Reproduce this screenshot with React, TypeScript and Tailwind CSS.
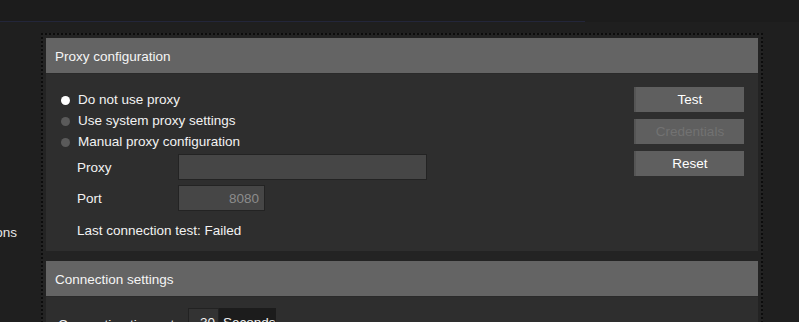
export default function App() {
  const font = { fontFamily: '"Liberation Sans", Arial, sans-serif' };
  return (
    <div className="w-[799px] h-[322px] overflow-hidden bg-[#1f1f1f] text-[#f2f2f2] text-[13.5px]" style={font}>
      {/* top strip */}
      <div className="h-[22px] bg-[#1c1c1c] flex flex-col justify-end">
        <div className="h-px w-[585px] bg-[#23263a]" />
      </div>

      <div className="flex mt-[11px]">
        {/* sidebar, cut off */}
        <div className="w-[41px] shrink-0">
          <div className="w-[17px] overflow-hidden flex justify-end mt-[190px] leading-[20px] text-[#e6e6e6]">
            <span className="shrink-0 whitespace-nowrap">Connections</span>
          </div>
        </div>

        {/* panel */}
        <div className="w-[722px] shrink-0 border-2 border-dotted border-[#0c0c0c] bg-[#232323] pt-[3px] px-[3px]">
          {/* Proxy configuration */}
          <div className="h-[36px] bg-[#646464] border-b border-[#2a2a2a] flex items-center pl-[9px] pt-[3px] text-[#f5f5f5]">
            Proxy configuration
          </div>
          <div className="h-[177px] bg-[#2e2e2e] flex justify-between">
            <div className="pt-[16px] pl-[15px]">
              {[
                { t: "Do not use proxy", on: true },
                { t: "Use system proxy settings", on: false },
                { t: "Manual proxy configuration", on: false },
              ].map((r) => (
                <div key={r.t} className="h-[21px] flex items-center gap-[8px]">
                  <span className={`w-[9px] h-[9px] rounded-full ${r.on ? "bg-white" : "bg-[#5a5a5a]"}`} />
                  <span>{r.t}</span>
                </div>
              ))}
              <div className="flex items-center mt-[1px] pl-[16px]">
                <span className="w-[101px] pt-[2px]">Proxy</span>
                <div className="w-[249px] h-[26px] bg-[#464646] border border-[#232323]" />
              </div>
              <div className="flex items-center mt-[5px] pl-[16px]">
                <span className="w-[101px] pt-[2px]">Port</span>
                <div className="w-[87px] h-[26px] bg-[#464646] border border-[#232323] flex items-center justify-end pr-[5px] pt-[2px] text-[#8c8c8c]">
                  8080
                </div>
              </div>
              <div className="mt-[10px] pl-[16px] leading-[20px]">Last connection test: Failed</div>
            </div>
            <div className="pt-[13px] pr-[14px] flex flex-col gap-[7px]">
              {[
                { t: "Test", off: false },
                { t: "Credentials", off: true },
                { t: "Reset", off: false },
              ].map((b) => (
                <button
                  key={b.t}
                  className={`w-[110px] h-[25px] pt-[2px] bg-[#5f5f5f] border-l-2 border-[#555] ${b.off ? "text-[#727272]" : "text-white"}`}
                >
                  {b.t}
                </button>
              ))}
            </div>
          </div>

          <div className="h-[10px]" />

          {/* Connection settings */}
          <div className="h-[36px] bg-[#646464] border-b border-[#2a2a2a] flex items-center pl-[9px] pt-[3px] text-[#f5f5f5]">
            Connection settings
          </div>
          <div className="h-[80px] bg-[#2e2e2e] pt-[11px] pl-[12px] flex items-start">
            <span className="w-[130px] leading-[24px] mt-[5px]">Connection timeout</span>
            <div className="w-[31px] h-[28px] bg-[#333] border border-[#222] flex items-center justify-end pr-[3px] pt-[2px]">30</div>
            <div className="w-[57px] h-[28px] bg-[#1c1c1c] flex items-center pl-[4px] pt-[2px]">Seconds</div>
          </div>
        </div>
      </div>
    </div>
  );
}
